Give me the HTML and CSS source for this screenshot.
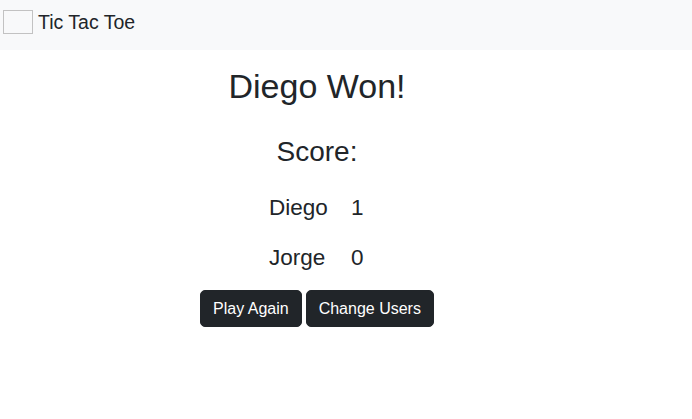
FILE: index.html
```html
<!DOCTYPE html>
<html lang="en">
<head>
<meta charset="utf-8">
<title>Tic Tac Toe</title>
<link rel="stylesheet" href="styles.css">
</head>
<body>
<nav class="navbar">
  <span class="logo" aria-hidden="true"></span>
  <span class="brand">Tic Tac Toe</span>
</nav>
<main class="game">
  <h1 class="result">Diego Won!</h1>
  <h2 class="score-title">Score:</h2>
  <div class="scores">
    <div class="score-row"><span class="name">Diego</span><span class="points">1</span></div>
    <div class="score-row"><span class="name">Jorge</span><span class="points">0</span></div>
  </div>
  <div class="actions">
    <button class="btn">Play Again</button>
    <button class="btn">Change Users</button>
  </div>
</main>
</body>
</html>
```
FILE: styles.css
```css
* { box-sizing: border-box; }
html, body { margin: 0; padding: 0; }
body {
  background: #fff;
  color: #212529;
  font-family: "Liberation Sans", Arial, sans-serif;
  width: 692px;
  height: 419px;
  overflow: hidden;
}
.navbar {
  height: 50px;
  background: #f8f9fa;
  display: flex;
  align-items: flex-start;
  padding: 10px 0 0 3px;
  gap: 5px;
}
.logo {
  width: 30px;
  height: 24px;
  border: 1px solid #c2c2c2;
  display: block;
}
.brand {
  font-size: 19.5px;
  line-height: 24px;
}
.game {
  padding-right: 58px;
  text-align: center;
}
.result {
  font-size: 34px;
  font-weight: 400;
  line-height: 1.2;
  margin: 16px 0 0;
}
.score-title {
  font-size: 28px;
  font-weight: 400;
  line-height: 1.2;
  margin: 28px 0 0;
}
.scores {
  display: flex;
  flex-direction: column;
  align-items: center;
  gap: 22.5px;
  margin-top: 26px;
}
.score-row {
  display: grid;
  grid-template-columns: 58px 14px;
  column-gap: 24px;
  font-size: 22.5px;
  line-height: 1.2;
  text-align: left;
}
.actions {
  display: flex;
  justify-content: center;
  gap: 4px;
  margin-top: 19px;
}
.btn {
  font-family: "Liberation Sans", Arial, sans-serif;
  font-size: 16px;
  line-height: 24px;
  padding: 6px 12px;
  height: 37px;
  background: #212529;
  color: #fff;
  border: 1px solid #212529;
  border-radius: 5px;
}
```
